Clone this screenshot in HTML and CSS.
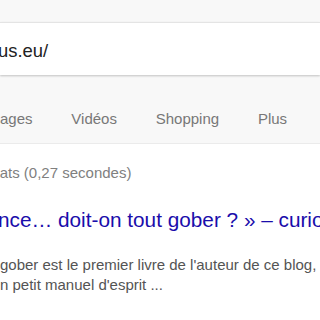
FILE: index.html
```html
<!DOCTYPE html>
<html lang="fr">
<head>
<meta charset="utf-8">
<link rel="stylesheet" href="styles.css">
</head>
<body>
<div class="top">
  <div class="searchbox"><span class="query">us.eu/</span></div>
  <nav class="tabs">
    <span class="tab first">Images</span>
    <span class="tab">Vidéos</span>
    <span class="tab">Shopping</span>
    <span class="tab">Plus</span>
  </nav>
</div>
<main class="results">
  <div class="stats">résultats (0,27 secondes)</div>
  <div class="result">
    <a class="title" href="#">nce… doit-on tout gober ? » – curiosus.eu</a>
    <div class="snippet">
      <div class="line">gober est le premier livre de l'auteur de ce blog, il</div>
      <div class="line">n petit manuel d'esprit ...</div>
    </div>
  </div>
</main>
</body>
</html>
```

FILE: styles.css
```css
html, body {
  margin: 0;
  padding: 0;
  background: #fff;
  font-family: "Liberation Sans", Arial, sans-serif;
  overflow: hidden;
}

.top {
  background: #f8f8f8;
  padding-top: 22px;
}

.searchbox {
  background: #fff;
  border-top: 1px solid #e4e4e4;
  height: 52px;
  box-sizing: content-box;
  padding: 0;
  box-shadow: 0 1px 2px rgba(0, 0, 0, 0.22);
  position: relative;
  white-space: nowrap;
  overflow: hidden;
}

.query {
  display: block;
  font-size: 18.46px;
  line-height: 24px;
  padding-top: 16px;
  margin-left: -2px;
  color: #222;
}

.tabs {
  display: flex;
  gap: 38.8px;
  padding: 34px 0 14px;
  margin-left: -16.7px;
  border-bottom: 1px solid #ebebeb;
  white-space: nowrap;
}

.tab {
  font-size: 15px;
  line-height: 20px;
  color: #777;
}

.results {
  white-space: nowrap;
  overflow: hidden;
}

.stats {
  font-size: 15px;
  line-height: 20px;
  color: #808080;
  padding-top: 18.5px;
  margin-left: -37px;
}

.result {
  padding-top: 24.3px;
}

.title {
  display: block;
  font-size: 20.77px;
  line-height: 26px;
  color: #1a0dab;
  text-decoration: none;
  margin-left: -2px;
}

.snippet {
  padding-top: 22px;
  font-size: 15px;
  line-height: 20px;
  color: #545454;
}
```
